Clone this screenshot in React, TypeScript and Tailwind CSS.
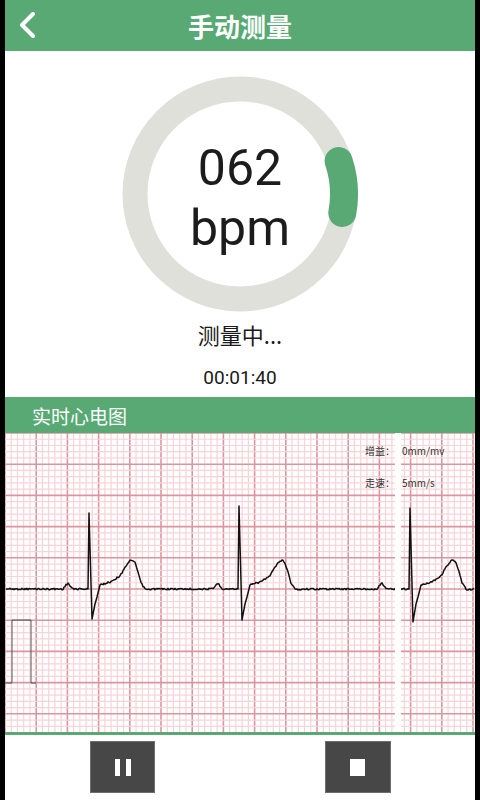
import React from "react";

type Beat = { r: number; peak: number; trough: number; p: number };

const BASE = 589;
const TOP = 433;
const LEFT = 5;

const BEATS: Beat[] = [
  { r: 89, peak: 513, trough: 619, p: -21 },
  { r: 239, peak: 506, trough: 620, p: -21 },
  { r: 410, peak: 508, trough: 622, p: -28 },
];

function noise(i: number) {
  const v = Math.sin(i * 12.9898 + 78.233) * 43758.5453;
  return (v - Math.floor(v) - 0.5) * 1.6;
}

function beatKnots(b: Beat): [number, number][] {
  return [
    [b.r + b.p - 5, BASE],
    [b.r + b.p - 2, BASE - 4],
    [b.r + b.p, BASE - 6],
    [b.r + b.p + 2, BASE - 3],
    [b.r + b.p + 5, BASE],
    [b.r - 1, BASE],
    [b.r, b.peak],
    [b.r + 3, b.trough],
    [b.r + 6, BASE + 15],
    [b.r + 8, BASE + 8],
    [b.r + 11, BASE - 4],
    [b.r + 21, BASE - 7],
    [b.r + 26, BASE - 10],
    [b.r + 31, BASE - 13],
    [b.r + 36, BASE - 22],
    [b.r + 41, BASE - 28],
    [b.r + 43, BASE - 29],
    [b.r + 46, BASE - 26],
    [b.r + 49, BASE - 17],
    [b.r + 52, BASE - 6],
    [b.r + 56, BASE],
    [b.r + 61, BASE + 1],
  ];
}

function waveY(x: number) {
  for (const b of BEATS) {
    const k = beatKnots(b);
    if (x < k[0][0] || x > k[k.length - 1][0]) continue;
    for (let i = 0; i < k.length - 1; i++) {
      const [x0, y0] = k[i];
      const [x1, y1] = k[i + 1];
      if (x >= x0 && x <= x1) {
        const t = x1 === x0 ? 0 : (x - x0) / (x1 - x0);
        const spike = x >= b.r - 1 && x <= b.r + 11;
        return y0 + (y1 - y0) * t + (spike ? 0 : noise(x));
      }
    }
  }
  return BASE + noise(x);
}

const WAVE = Array.from({ length: 469 }, (_, i) => {
  const x = 6 + i;
  return `${x - LEFT},${(waveY(x) - TOP).toFixed(1)}`;
}).join(" ");

const STEP = 6.24;

function EcgChart() {
  const minors = Array.from({ length: 76 }, (_, i) => i);
  const rows = Array.from({ length: 49 }, (_, i) => i);
  return (
    <svg width="470" height="299" viewBox="0 0 470 299" className="block">
      <rect width="470" height="299" fill="#ffffff" />
      {minors.map((i) => (
        <line
          key={`v${i}`}
          x1={i * STEP}
          x2={i * STEP}
          y1="0"
          y2="299"
          stroke={i % 5 === 0 ? "#dc959e" : "#f8d3d7"}
          strokeWidth={i % 5 === 0 ? 1.6 : 1.2}
        />
      ))}
      {rows.map((i) => (
        <line
          key={`h${i}`}
          x1="0"
          x2="470"
          y1={i * STEP}
          y2={i * STEP}
          stroke={i % 5 === 0 ? "#dc959e" : "#f8d3d7"}
          strokeWidth={i % 5 === 0 ? 1.6 : 1.2}
        />
      ))}
      <polyline
        points={WAVE}
        fill="none"
        stroke="#111111"
        strokeWidth="1.5"
        strokeLinejoin="round"
      />
      <polyline
        points="0,250 7,250 7,187 26,187 26,250 31,250"
        fill="none"
        stroke="#555555"
        strokeWidth="1"
      />
      <rect x="390" y="0" width="6" height="299" fill="#ffffff" />
      <g
        fontFamily="'Noto Sans CJK SC', Roboto, sans-serif"
        fontSize="10"
        fill="#333333"
      >
        <text x="360" y="22">增益：</text>
        <text x="397" y="22">0mm/mv</text>
        <text x="360" y="54">走速：</text>
        <text x="397" y="54">5mm/s</text>
      </g>
    </svg>
  );
}

function Ring() {
  return (
    <div className="relative h-[240px] w-[240px]">
      <svg width="240" height="240" viewBox="0 0 240 240" className="block">
        <circle cx="120" cy="120" r="105" fill="none" stroke="#e0e0db" strokeWidth="25" />
        <path
          d="M218.6 87 A104 104 0 0 1 222.3 139"
          fill="none"
          stroke="#58a974"
          strokeWidth="28"
          strokeLinecap="round"
        />
      </svg>
      <div className="absolute inset-x-0 top-[64px] text-center font-['Roboto',sans-serif] text-[50px] leading-[60px] text-[#1c1c1c]">
        <div>062</div>
        <div>bpm</div>
      </div>
    </div>
  );
}

export default function App() {
  return (
    <div className="flex h-[800px] w-[480px] flex-col bg-black px-[5px] font-['Noto_Sans_CJK_SC',sans-serif]">
      <header className="relative flex h-[51px] shrink-0 items-center justify-center bg-[#58a974]">
        <svg
          width="20"
          height="28"
          viewBox="0 0 20 28"
          className="absolute left-[12px] top-[11px]"
        >
          <polyline
            points="16,3 5,14 16,25"
            fill="none"
            stroke="#ffffff"
            strokeWidth="4"
            strokeLinecap="round"
            strokeLinejoin="round"
          />
        </svg>
        <h1 className="text-[26px] font-bold leading-none text-white">手动测量</h1>
      </header>

      <main className="flex h-[346px] shrink-0 flex-col items-center bg-white pt-[23px]">
        <Ring />
        <p className="mt-[5px] text-[22px] leading-[30px] text-[#1a1a1a]">测量中...</p>
        <p className="mt-[17px] font-['Roboto',sans-serif] text-[19px] leading-[24px] text-[#1a1a1a]">
          00:01:40
        </p>
      </main>

      <div className="flex h-[36px] shrink-0 items-center bg-[#58a974] pl-[27px] text-[19px] leading-none text-white">
        实时心电图
      </div>

      <section className="h-[299px] shrink-0 bg-white">
        <EcgChart />
      </section>

      <div className="h-[3px] shrink-0 bg-[#58a974]" />

      <footer className="grid h-[65px] shrink-0 grid-cols-2 justify-items-center bg-white pt-[6px]">
        <button className="flex h-[52px] w-[65px] items-center justify-center gap-[6px] border border-[#6e6e6e] bg-[#474747]">
          <span className="h-[17px] w-[5px] bg-white" />
          <span className="h-[17px] w-[5px] bg-white" />
        </button>
        <button className="flex h-[52px] w-[66px] items-center justify-center border border-[#6e6e6e] bg-[#474747]">
          <span className="h-[17px] w-[15px] bg-white" />
        </button>
      </footer>
    </div>
  );
}
